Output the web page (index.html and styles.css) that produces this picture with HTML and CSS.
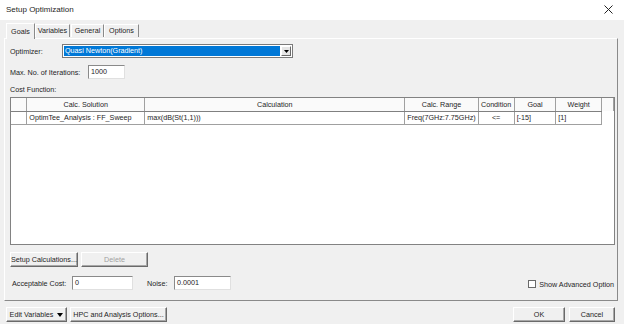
FILE: index.html
```html
<!DOCTYPE html>
<html lang="en">
<head>
    <meta charset="UTF-8">
    <link rel="stylesheet" href="styles.css">
    <title>Setup Optimization</title>
</head>
<body>
    <div class="titlebar">
        <span class="titulo">Setup Optimization</span>
        <svg class="fechar" width="9" height="9" viewBox="0 0 9 9">
            <path d="M0.5 0.5 L8.5 8.5 M8.5 0.5 L0.5 8.5" stroke="#222" stroke-width="1" fill="none"/>
        </svg>
    </div>

    <div class="conteudo">
        <div class="tabs">
            <div class="tab ativa">Goals</div>
            <div class="tab t-var">Variables</div>
            <div class="tab t-gen">General</div>
            <div class="tab t-opt">Options</div>
        </div>

        <div class="painel">
            <div class="linha">
                <span class="rotulo r-opt">Optimizer:</span>
                <div class="combo">
                    <span class="combo-sel">Quasi Newton(Gradient)</span>
                    <span class="combo-btn">
                        <svg width="5" height="3" viewBox="0 0 5 3"><path d="M0 0 H5 L2.5 3 Z" fill="#000"/></svg>
                    </span>
                </div>
            </div>

            <div class="linha l-iter">
                <span class="rotulo r-iter">Max. No. of Iterations:</span>
                <div class="campo c-iter">1000</div>
            </div>

            <div class="rotulo-custo">Cost Function:</div>

            <div class="grade">
                <table>
                    <tr class="cabecalho">
                        <th class="col-hdr"></th>
                        <th class="col-sol">Calc. Solution</th>
                        <th class="col-calc">Calculation</th>
                        <th class="col-range">Calc. Range</th>
                        <th class="col-cond">Condition</th>
                        <th class="col-goal">Goal</th>
                        <th class="col-weight">Weight</th>
                        <th class="col-extra"></th>
                    </tr>
                    <tr class="dados">
                        <td class="col-hdr"></td>
                        <td>OptimTee_Analysis : FF_Sweep</td>
                        <td>max(dB(St(1,1)))</td>
                        <td>Freq(7GHz:7.75GHz)</td>
                        <td class="centro">&lt;=</td>
                        <td>[-15]</td>
                        <td>[1]</td>
                        <td class="vazio"></td>
                    </tr>
                </table>
            </div>

            <div class="linha l-botoes">
                <button class="botao b-setup">Setup Calculations...</button>
                <button class="botao b-delete" disabled>Delete</button>
            </div>

            <div class="linha l-custo">
                <span class="rotulo r-custo">Acceptable Cost:</span>
                <div class="campo c-custo">0</div>
                <span class="rotulo r-noise">Noise:</span>
                <div class="campo c-noise">0.0001</div>
                <label class="avancado"><span class="caixa"></span>Show Advanced Option</label>
            </div>
        </div>

        <div class="rodape">
            <button class="botao b-edit">Edit Variables <svg width="6" height="4" viewBox="0 0 6 4"><path d="M0 0 H6 L3 4 Z" fill="#000"/></svg></button>
            <button class="botao b-hpc">HPC and Analysis Options...</button>
            <span class="espaco"></span>
            <button class="botao b-ok">OK</button>
            <button class="botao b-cancel">Cancel</button>
        </div>
    </div>
</body>
</html>
```

FILE: styles.css
```css
body {
    margin: 0;
    width: 624px;
    height: 324px;
    overflow: hidden;
    background: #f0f0f0;
    font-family: "Liberation Sans", Arial, sans-serif;
    font-size: 7.2px;
    color: #1e1e1e;
}

.titlebar {
    height: 20px;
    background: #fff;
    display: flex;
    align-items: center;
    justify-content: space-between;
    padding: 0 11px 0 6px;
}

.titulo {
    font-size: 8px;
    margin-top: -2px;
}

.fechar {
    margin-top: -2px;
}

.conteudo {
    padding: 3px 0 0 4px;
}

.tabs {
    display: flex;
    align-items: flex-end;
    height: 15px;
    padding-left: 2px;
    position: relative;
    z-index: 1;
}

.tab {
    height: 12px;
    line-height: 12px;
    text-align: center;
    border-top: 1px solid #fff;
    border-left: 1px solid #fff;
    border-right: 1px solid #8a8a8a;
    margin-bottom: 1px;
}

.tab.ativa {
    width: 27px;
    height: 15px;
    line-height: 15px;
    margin-bottom: -1px;
    background: #f0f0f0;
}

.t-var { width: 33px; }
.t-gen { width: 31px; margin-left: 1px; }
.t-opt { width: 33px; }

.painel {
    box-sizing: border-box;
    height: 263px;
    width: 614px;
    border: 1px solid;
    border-color: #fff #8a8a8a #8a8a8a #fff;
    padding: 5px 0 0 5px;
}

.linha {
    display: flex;
    align-items: center;
}

.rotulo {
    white-space: nowrap;
}

.r-opt { width: 52px; }
.r-iter { width: 78px; }

.combo {
    width: 231px;
    height: 14px;
    box-sizing: border-box;
    background: #fff;
    border: 1px solid #7a7a7a;
    display: flex;
    padding: 1px;
}

.combo-sel {
    flex: 1;
    background: #0078d7;
    color: #fff;
    line-height: 10px;
    padding-left: 1px;
}

.combo-btn {
    width: 10px;
    box-sizing: border-box;
    margin-left: 1px;
    background: #e6e6e6;
    border: 1px solid;
    border-color: #fff #6a6a6a #6a6a6a #fff;
    display: flex;
    align-items: center;
    justify-content: center;
}

.campo {
    height: 14px;
    box-sizing: border-box;
    background: #fff;
    border: 1px solid;
    border-color: #8a8a8a #e0e0e0 #e0e0e0 #8a8a8a;
    line-height: 12px;
    padding-left: 2px;
}

.l-iter {
    margin-top: 7px;
}

.c-iter { width: 37px; }

.rotulo-custo {
    margin-top: 5px;
    height: 13px;
    line-height: 12px;
}

.grade {
    width: 605px;
    height: 148px;
    box-sizing: border-box;
    border: 1px solid #828282;
    background: #fff;
}

table {
    border-collapse: collapse;
    table-layout: fixed;
}

th, td {
    height: 13px;
    box-sizing: border-box;
    padding: 0 2px;
    font-weight: normal;
    white-space: nowrap;
    overflow: hidden;
    border-right: 1px solid #a0a0a0;
    border-bottom: 1px solid #a0a0a0;
}

th {
    background: #fafafa;
    text-align: center;
}

.cabecalho th {
    border-bottom-color: #808080;
}

td.centro { text-align: center; }

td.vazio, th.col-extra {
    border-bottom: none;
}

td.vazio { border-right: none; }

.col-hdr { width: 16px; }
.col-sol { width: 118px; }
.col-calc { width: 263px; }
.col-range { width: 70px; }
.col-cond { width: 36px; }
.col-goal { width: 42px; }
.col-weight { width: 46px; }
.col-extra { width: 12px; }

.l-botoes {
    margin-top: 7px;
    gap: 3px;
}

.botao {
    font-family: inherit;
    font-size: 7.2px;
    color: #1e1e1e;
    height: 15px;
    box-sizing: border-box;
    background: #f0f0f0;
    border: 1px solid;
    border-color: #fff #6a6a6a #6a6a6a #fff;
    box-shadow: inset -1px -1px 0 #a8a8a8;
    padding: 0;
    display: inline-flex;
    align-items: center;
    justify-content: center;
}

.b-setup { width: 68px; }

.b-delete {
    width: 67px;
    color: #a0a0a0;
}

.l-custo {
    margin-top: 9px;
    padding-left: 2px;
    padding-right: 3px;
}

.r-custo { width: 60px; }
.c-custo { width: 61px; }
.r-noise { margin-left: 14px; width: 27px; }
.c-noise { width: 57px; }

.avancado {
    margin-left: auto;
    display: flex;
    align-items: center;
    margin-top: 2px;
}

.caixa {
    width: 8px;
    height: 8px;
    box-sizing: border-box;
    background: #fff;
    border: 1px solid #6a6a6a;
    margin-right: 3px;
}

.rodape {
    display: flex;
    align-items: center;
    padding: 6px 9px 0 2px;
    gap: 3px;
}

.b-edit {
    width: 61px;
    gap: 4px;
}

.b-hpc { width: 97px; }

.espaco { flex: 1; }

.b-ok { width: 52px; }
.b-cancel { width: 46px; margin-left: 1px; }
```
